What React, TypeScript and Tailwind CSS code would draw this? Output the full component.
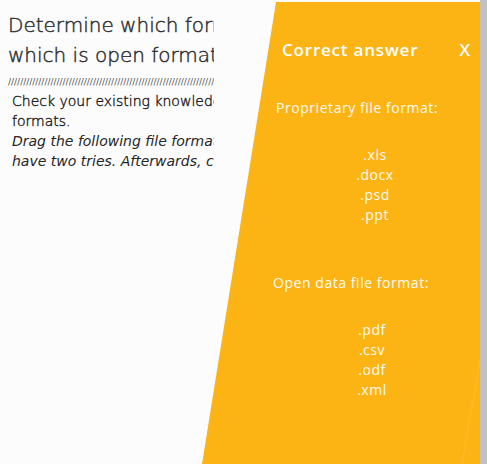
import React from "react";

const items1 = [".xls", ".docx", ".psd", ".ppt"];
const items2 = [".pdf", ".csv", ".odf", ".xml"];

export default function App() {
  const slashes = "/".repeat(90);
  return (
    <div className="flex h-[464px] w-[487px] overflow-hidden bg-[#fcfcfc]" style={{ fontFamily: "'Open Sans', Lato, sans-serif" }}>
      <div className="relative h-full w-[480px]">
        <div className="w-[214px] overflow-hidden pl-[8px]" style={{ fontFamily: "'DejaVu Sans', sans-serif" }}>
          <div className="whitespace-nowrap pt-[10px] text-[20px] font-extralight leading-[30px] text-[#2e2e2e] [-webkit-text-stroke:0.45px_#2e2e2e]">
            <div>Determine which format is proprietary and</div>
            <div>which is open format?</div>
          </div>
          <div className="mt-[6px] h-[12px] overflow-hidden whitespace-nowrap text-[9px] leading-[12px] text-[#555]">
            {slashes}
          </div>
          <div className="mt-[3px] whitespace-nowrap pl-[4px] text-[14px] leading-[20px] text-[#1e1e1e]">
            <div className="font-extralight [-webkit-text-stroke:0.4px_#1e1e1e]">Check your existing knowledge of file</div>
            <div className="font-extralight [-webkit-text-stroke:0.4px_#1e1e1e]">formats.</div>
            <div className="font-normal italic text-[#262626]">Drag the following file formats into the</div>
            <div className="font-normal italic text-[#262626]">have two tries. Afterwards, click on</div>
          </div>
        </div>

        <div
          className="absolute right-0 top-[2px] bottom-0 w-[278px] bg-[#fcb415] text-white"
          style={{ clipPath: "polygon(74px 0, 100% 0, 100% 100%, 0 100%)" }}
        >
          <svg className="absolute inset-0 h-full w-full" viewBox="0 0 278 462" preserveAspectRatio="none">
            <line x1="278" y1="358" x2="260" y2="462" stroke="#fdc23a" strokeWidth="1" opacity="0.6" />
          </svg>
          <div className="relative flex flex-col tracking-[0.55px]">
            <div className="flex items-center justify-between pl-[80px] pr-[9px] pt-[36px] text-[17px] font-semibold leading-[24px] tracking-[0.8px]">
              <span>Correct answer</span>
              <span>X</span>
            </div>
            <div className="mt-[36px] pl-[74px] text-[14px] leading-[20px] text-[#fffaf0]">Proprietary file format:</div>
            <div className="ml-[133px] mt-[27px] flex w-[80px] flex-col items-center text-[14px] leading-[20px] text-[#fffaf0]">
              {items1.map((t) => (
                <div key={t}>{t}</div>
              ))}
            </div>
            <div className="mt-[48px] pl-[71px] text-[14px] leading-[20px] text-[#fffaf0]">Open data file format:</div>
            <div className="ml-[130px] mt-[27px] flex w-[80px] flex-col items-center text-[14px] leading-[20px] text-[#fffaf0]">
              {items2.map((t) => (
                <div key={t}>{t}</div>
              ))}
            </div>
          </div>
        </div>
      </div>
      <div className="h-full w-[7px] bg-[#c1c1c1]" />
    </div>
  );
}
